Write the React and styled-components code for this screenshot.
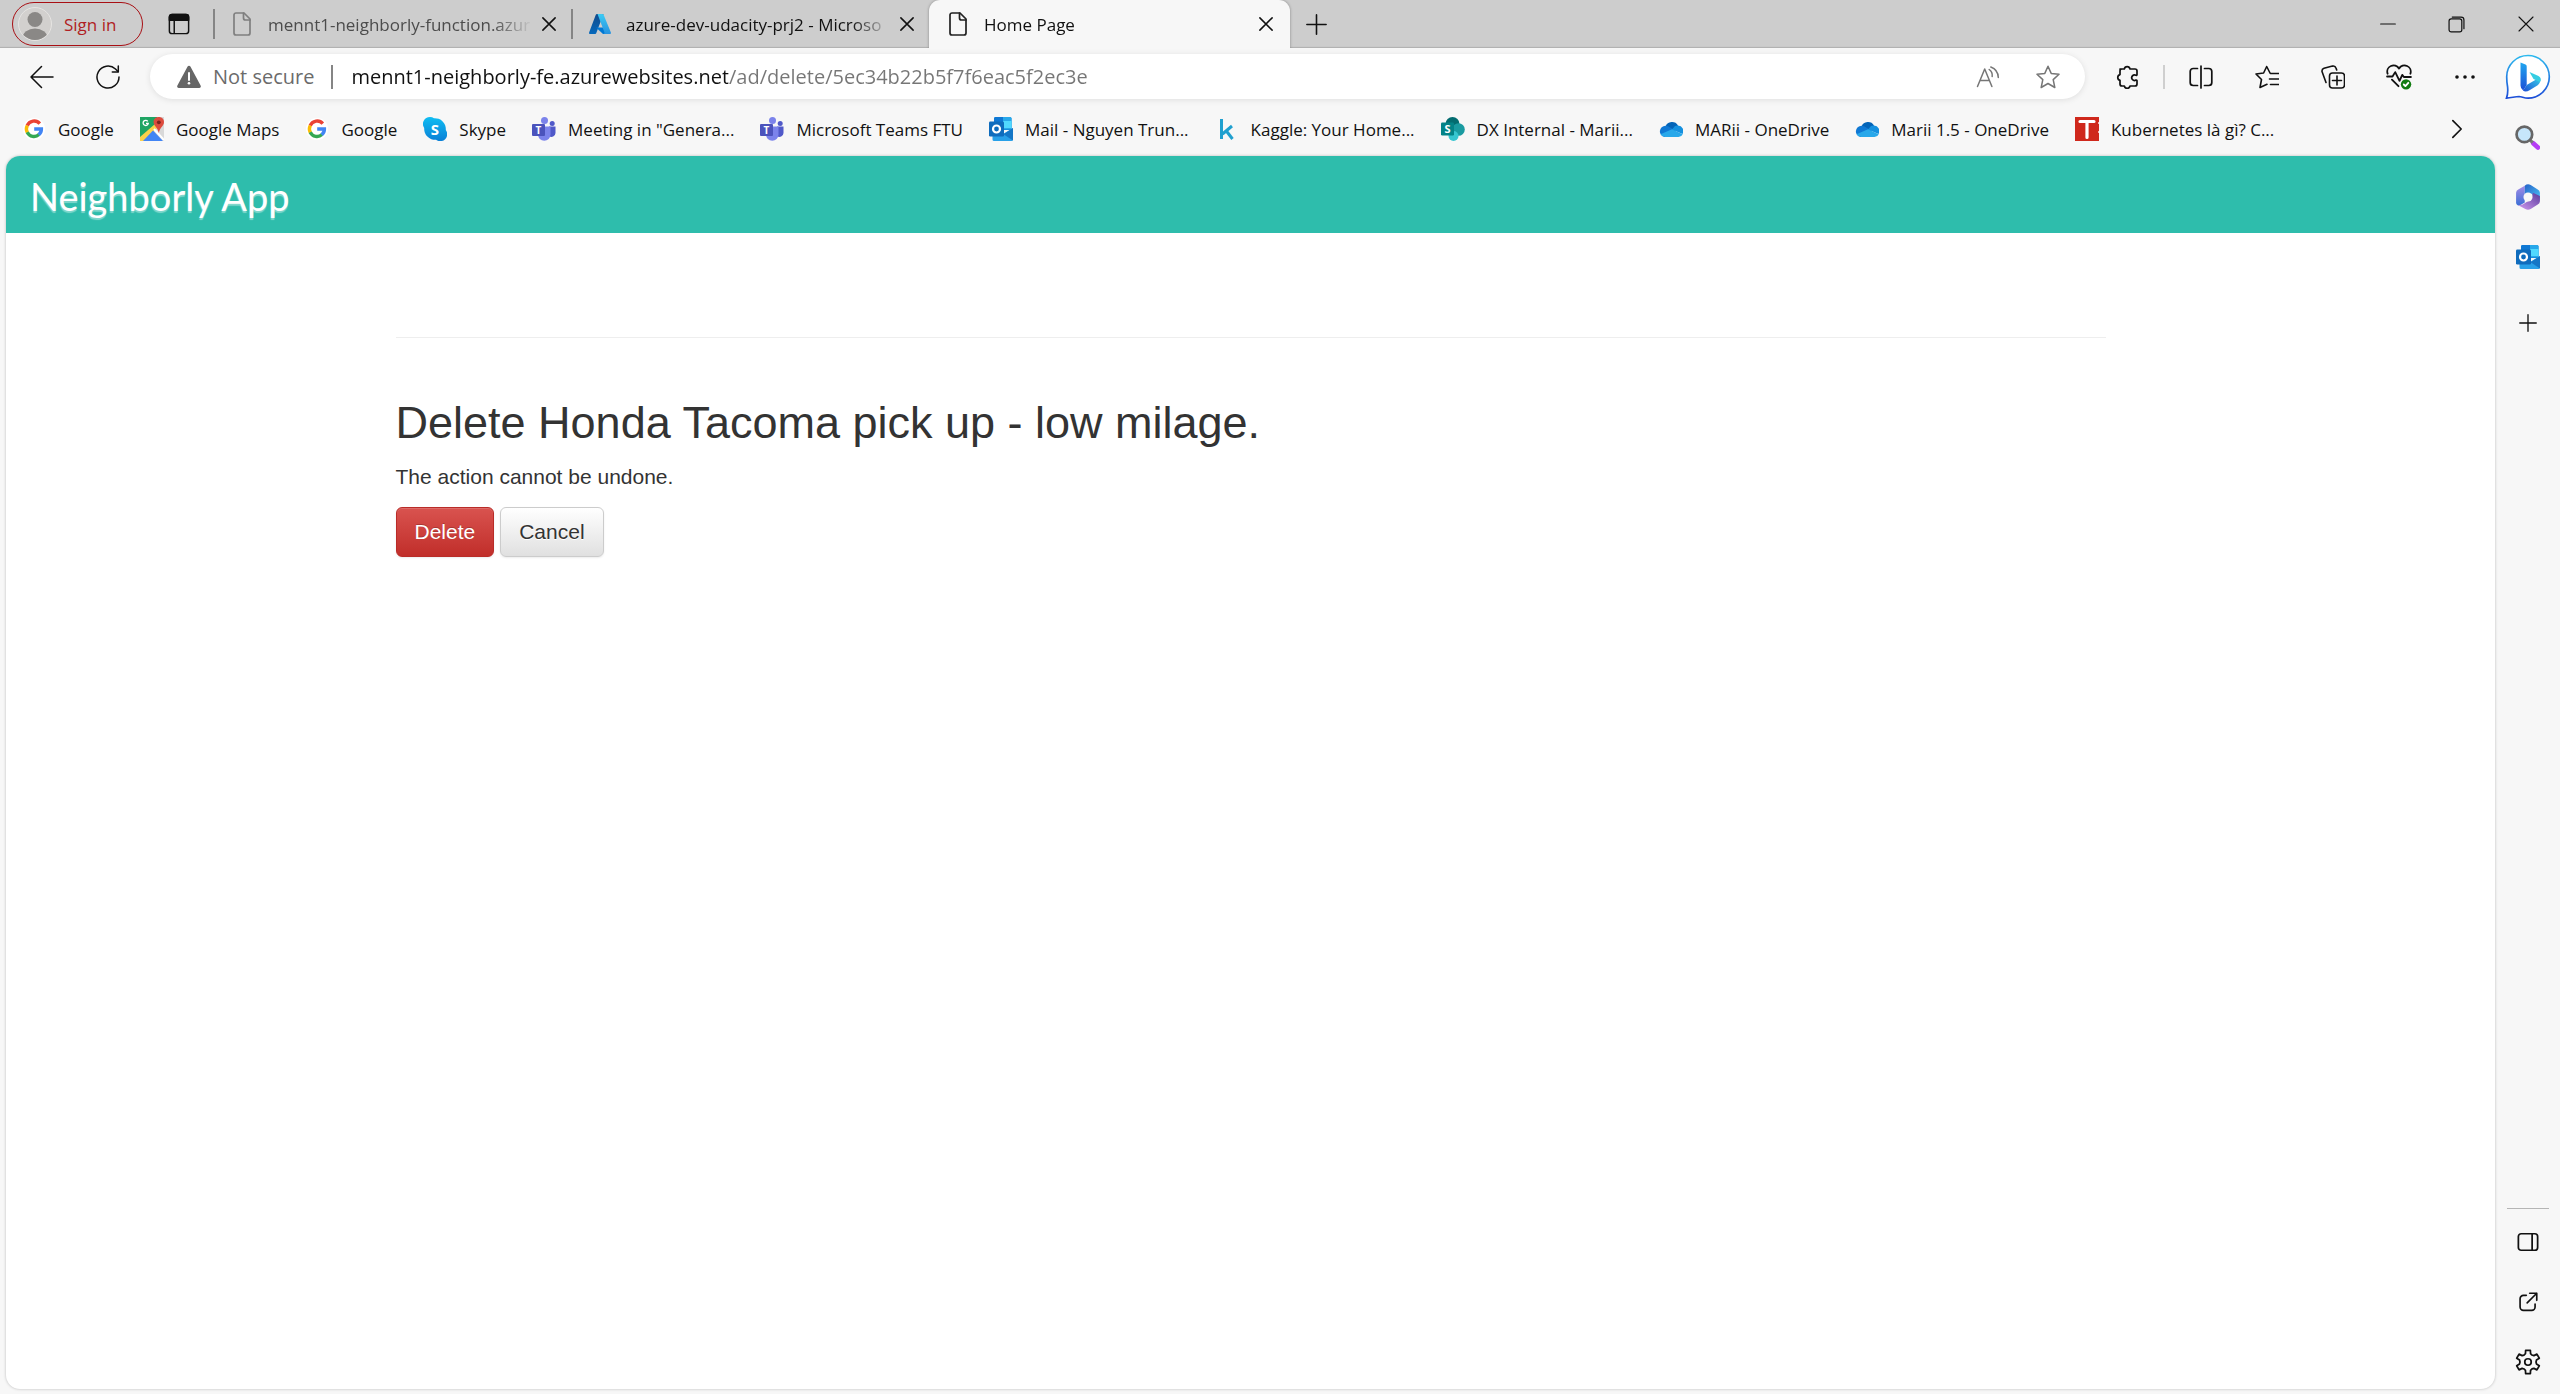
import React from "react";
import styled, { createGlobalStyle, css } from "styled-components";

const UI_FONT = '"Open Sans", "Noto Sans", sans-serif';
const BRAND_FONT = 'Lato, "Open Sans", sans-serif';
const PAGE_FONT = '"Liberation Sans", Arial, sans-serif';

const GlobalStyle = createGlobalStyle`
  *, *::before, *::after { box-sizing: border-box; }
  body { margin: 0; background: #f7f7f7; font-family: ${UI_FONT}; }
  button, input { font: inherit; color: inherit; }
  button { padding: 0; border: 0; background: none; cursor: pointer; }
  svg { display: block; flex: none; }
`;

/* ---------- window frame ---------- */

const Window = styled.div`
  display: flex;
  flex-direction: column;
  min-height: 100vh;
  background: #f7f7f7;
  color: #111;
`;

const Body = styled.div`
  flex: 1;
  display: flex;
`;

const Main = styled.div`
  flex: 1;
  min-width: 0;
  display: flex;
  flex-direction: column;
`;

/* ---------- tab strip ---------- */

const TabStrip = styled.header`
  display: flex;
  align-items: center;
  height: 48px;
  background: #cdcdcd;
  box-shadow: inset 0 -2px 1px -1px #b0b0b0;
  font-size: 17px;
`;

const SignIn = styled.button`
  display: flex;
  align-items: center;
  gap: 12px;
  width: 131px;
  height: 44px;
  margin-left: 12px;
  padding-left: 5px;
  border: 1px solid #a80f14;
  border-radius: 22px;
  color: #b01e23;
`;

const TabActions = styled.button`
  display: grid;
  place-items: center;
  width: 36px;
  height: 36px;
  margin: 0 16px 0 18px;
`;

const TabDivider = styled.span`
  width: 2px;
  height: 30px;
  background: #858585;
`;

const TabList = styled.div`
  display: flex;
  align-items: center;
  align-self: stretch;
`;

const Tab = styled.div`
  display: flex;
  align-items: center;
  align-self: stretch;
  width: 356px;
  padding: 0 8px 0 15px;
  color: ${(p) => (p.$asleep ? "#4c4c4c" : "#111")};
  ${(p) =>
    p.$active &&
    css`
      width: 361px;
      padding: 0 10px 0 17px;
      border-radius: 11px 11px 0 0;
      background: #f7f7f7;
      box-shadow: 0 0 3px rgba(0, 0, 0, 0.35);
      clip-path: inset(0 -4px 0 -4px);
    `}
`;

const TabTitle = styled.button`
  flex: 1;
  min-width: 0;
  display: flex;
  align-items: center;
  gap: 14px;
  height: 100%;
  text-align: left;
`;

const TabLabel = styled.span`
  flex: 1;
  overflow: hidden;
  white-space: nowrap;
  mask-image: linear-gradient(90deg, #000 calc(100% - 40px), transparent);
`;

const CloseTab = styled.button`
  display: grid;
  place-items: center;
  width: 28px;
  height: 28px;
  margin-left: 2px;
  color: #111;
`;

const NewTab = styled.button`
  display: grid;
  place-items: center;
  width: 36px;
  height: 36px;
  margin-left: 8px;
`;

const WindowControls = styled.div`
  display: flex;
  align-self: stretch;
  margin-left: auto;
`;

const WindowButton = styled.button`
  display: grid;
  place-items: center;
  width: 69px;
`;

/* ---------- toolbar ---------- */

const Toolbar = styled.nav`
  display: flex;
  align-items: center;
  height: 54px;
  padding: 6px 0 3px 24px;
`;

const HistoryButton = styled.button`
  display: grid;
  place-items: center;
  width: 36px;
  height: 36px;
  margin-right: ${(p) => (p.$last ? 24 : 30)}px;
`;

const AddressBar = styled.form`
  flex: 1;
  display: flex;
  align-items: center;
  height: 45px;
  padding: 0 7px 0 27px;
  margin-right: 12px;
  border-radius: 23px;
  background: #fff;
  box-shadow: 0 1px 6px rgba(0, 0, 0, 0.1);
  font-size: 20px;
`;

const Security = styled.button`
  display: flex;
  align-items: center;
  gap: 12px;
  color: #6b6b6b;
`;

const AddressDivider = styled.span`
  width: 2px;
  height: 24px;
  margin: 0 18px 0 17px;
  background: #858585;
`;

const Address = styled.input`
  flex: 1;
  min-width: 0;
  height: 36px;
  padding: 0;
  border: 0;
  outline: 0;
  background: linear-gradient(90deg, #111 377px, #767676 377px);
  background-clip: text;
  color: transparent;
`;

const ToolButton = styled.button`
  display: grid;
  place-items: center;
  width: 60px;
  height: 36px;
  color: ${(p) => (p.$muted ? "#767676" : "#111")};
`;

const ToolGroup = styled.div`
  display: flex;
  align-items: center;
  gap: 6px;
`;

const ToolDivider = styled.span`
  width: 2px;
  height: 24px;
  background: #cfcfcf;
`;

/* ---------- favourites ---------- */

const Favourites = styled.nav`
  display: flex;
  align-items: center;
  height: 54px;
  padding: 0 8px 0 22px;
  font-size: 17px;
`;

const FavouriteList = styled.ul`
  flex: 1;
  display: flex;
  gap: 26px;
  margin: 0;
  padding: 0;
  list-style: none;
`;

const Favourite = styled.a`
  display: flex;
  align-items: center;
  gap: 12px;
  color: #111;
  text-decoration: none;
  white-space: nowrap;
`;

/* ---------- side bar ---------- */

const SideBar = styled.aside`
  display: flex;
  flex-direction: column;
  align-items: center;
  width: 65px;
  padding: 6px 0 2px;
`;

const BingButton = styled.button`
  height: 45px;
  margin-bottom: 8px;
`;

const SideButton = styled.button`
  display: grid;
  place-items: center;
  width: 42px;
  height: 60px;
`;

const AddButton = styled(SideButton)`
  margin-top: 6px;
`;

const SideFooter = styled.div`
  display: flex;
  flex-direction: column;
  align-items: center;
  margin-top: auto;
  padding-top: 3px;
  border-top: 1px solid #b5b5b5;
`;

/* ---------- web page ---------- */

const Page = styled.div`
  flex: 1;
  margin: 0 0 5px 6px;
  overflow: hidden;
  border-radius: 14px;
  background: #fff;
  box-shadow: 0 0 3px rgba(0, 0, 0, 0.25);
  color: #333;
  font-family: ${PAGE_FONT};
  font-size: 21px;
  line-height: 30px;
`;

const Banner = styled.header`
  display: flex;
  align-items: center;
  height: 77px;
  padding: 3px 24px 0;
  background: #2ebdac;
`;

const Brand = styled.a`
  color: #fff;
  font-family: ${BRAND_FONT};
  font-size: 38px;
  line-height: 48px;
  text-decoration: none;
  text-shadow: 0 2px 1px rgba(255, 255, 255, 0.4);
`;

const Container = styled.main`
  max-width: 1770px;
  margin: 0 auto;
  padding: 104px 30px 0;
`;

const Rule = styled.hr`
  height: 1px;
  margin: 0 0 60px;
  border: 0;
  background: #eee;
`;

const Heading = styled.h2`
  margin: 0 0 14px;
  font-size: 45px;
  font-weight: 400;
  line-height: 50px;
`;

const Warning = styled.p`
  margin: 0 0 15px;
`;

const Actions = styled.form`
  display: flex;
  gap: 6px;
`;

const ActionButton = styled.button`
  padding: 9px 18px;
  border: 1px solid #ccc;
  border-radius: 6px;
  background: linear-gradient(#fff, #e0e0e0);
  box-shadow: inset 0 1px 0 rgba(255, 255, 255, 0.15), 0 1px 2px rgba(0, 0, 0, 0.08);
  color: #333;
  text-shadow: 0 1px 0 #fff;
  ${(p) =>
    p.$danger &&
    css`
      border-color: #b92c28;
      background: linear-gradient(#d9534f, #c12e2a);
      color: #fff;
      text-shadow: 0 -1px 0 rgba(0, 0, 0, 0.2);
    `}
`;

/* ---------- line icons ---------- */

const Line = ({ size = 24, width = 1.5, children, ...rest }) => (
  <svg width={size} height={size} viewBox="0 0 24 24" fill="none" stroke="currentColor"
    strokeWidth={width} strokeLinecap="round" strokeLinejoin="round" aria-hidden="true" {...rest}>
    {children}
  </svg>
);

const DocIcon = ({ faded }) => (
  <Line color={faded ? "#7f7f7f" : "#222"} width={1.7}>
    <path d="M6 1h8l6 6v14a2 2 0 0 1-2 2H6a2 2 0 0 1-2-2V3a2 2 0 0 1 2-2z" />
    <path d="M13.500 1v5a2 2 0 0 0 2 2H20" />
  </Line>
);
const CrossIcon = ({ size = 14, width = 2.6 }) => (
  <Line size={size} width={width}><path d="M1.500 1.500l21 21M22.500 1.500l-21 21" /></Line>
);
const PlusIcon = ({ size = 21 }) => (
  <Line size={size} width={1.8}><path d="M12 1v22M1 12h22" /></Line>
);
const TabActionsIcon = () => (
  <Line size={22} width={1.6}>
    <rect x="1.500" y="1.500" width="21" height="21" rx="3" />
    <path d="M1.500 8V4.500a3 3 0 0 1 3-3h15a3 3 0 0 1 3 3V8z" fill="currentColor" />
    <path d="M6.800 8v14" />
  </Line>
);
const BackIcon = () => <Line><path d="M23 12H1M11.500 1.500L1 12l10.500 10.500" /></Line>;
const ReloadIcon = () => (
  <Line>
    <path d="M23 12A11 11 0 1 1 19.500 4L22 6.500" />
    <path d="M22.300 1v6h-6" />
  </Line>
);
const WarnIcon = () => (
  <svg width="24" height="24" viewBox="0 0 24 24" aria-hidden="true">
    <path d="M10.600 1.600a1.600 1.600 0 0 1 2.800 0l10.200 19a1.600 1.600 0 0 1-1.400 2.400H1.800a1.600 1.600 0 0 1-1.400-2.400z" fill="#666" />
    <path d="M12 8v7" stroke="#fff" strokeWidth="2" strokeLinecap="round" />
    <circle cx="12" cy="18.300" r="1.300" fill="#fff" />
  </svg>
);
const ReadAloudIcon = () => (
  <Line>
    <path d="M1.500 21.500L8.700 4l7.200 17.500M4 15.500h9.500" />
    <path d="M13.200 4.500a7.500 7.500 0 0 1 3 7M14.800 2a11.500 11.500 0 0 1 7.500 10.500" />
  </Line>
);
const StarIcon = () => (
  <Line><path d="M12 1.200l3.200 7.200 7.800.9-5.800 5.300 1.600 7.900L12 18.500l-6.800 4 1.600-7.900L1 9.300l7.800-.9z" /></Line>
);
const PuzzleIcon = () => (
  <Line width={1.700}>
    <path d="M5 4h4.300a2.900 2.900 0 0 1 5.700 0H20a2 2 0 0 1 2 2v3.600a.8.8 0 0 1-1 .7 2.800 2.800 0 1 0 0 4.800.8.8 0 0 1 1 .7V19a2 2 0 0 1-2 2h-5a2.900 2.900 0 0 1-5.700 0H7a2 2 0 0 1-2-2v-3.600a3 3 0 0 1 0-5.800V6a2 2 0 0 1 2-2" />
  </Line>
);
const SplitIcon = () => (
  <Line width={1.700}>
    <path d="M8.500 3.500H4.200a3 3 0 0 0-3 3v11a3 3 0 0 0 3 3h4.300M15.500 3.500h4.300a3 3 0 0 1 3 3v11a3 3 0 0 1-3 3h-4.300M12 1v22" />
  </Line>
);
const FavouritesIcon = () => (
  <Line width={1.600}>
    <path d="M15 8l-3.300-6.500L8.600 8 1 9l5.500 5.500L5 22.500l7-3.200" />
    <path d="M15.500 8.500H24M14.500 14H24M15.500 19.500H24" />
  </Line>
);
const CollectionsIcon = () => (
  <Line width={1.600}>
    <rect x="8.500" y="8" width="15" height="15" rx="3" />
    <path d="M16 11v9M11.500 15.500h9M5 17.500L1 6.500a3 3 0 0 1 2-3.200l8.500-2.200a3 3 0 0 1 3.500 2L15.700 5" />
  </Line>
);
const HealthIcon = () => (
  <Line size={26} width={1.700}>
    <path d="M1.500 9A5.800 5.800 0 0 1 12 4.200 5.800 5.800 0 0 1 22.500 9M1 11.500h5l2.500-4 4 8 2.500-5.500 1.500 2H23M5.500 14.500l6 6" />
    <circle cx="18.500" cy="18.800" r="4.800" fill="#107c10" stroke="none" />
    <path d="M16.400 18.900l1.500 1.500 2.700-3" stroke="#fff" />
  </Line>
);
const DotsIcon = () => (
  <svg width="20" height="6" viewBox="0 0 20 6" aria-hidden="true">
    {[2, 10, 18].map((x) => <circle key={x} cx={x} cy="3" r="1.800" fill="#111" />)}
  </svg>
);
const ChevronIcon = () => <Line size={20} width={2}><path d="M7 2l10 10L7 22" /></Line>;
const MinimizeIcon = () => <Line size={16} width={1.800}><path d="M1 12h22" /></Line>;
const RestoreIcon = () => (
  <Line size={17} width={1.700}>
    <rect x="1.500" y="4" width="18" height="18.500" rx="3" />
    <path d="M6 1.500h12.500a4 4 0 0 1 4 4V18" />
  </Line>
);

/* ---------- colour icons ---------- */

const Colour = ({ size = 24, children }) => (
  <svg width={size} height={size} viewBox="0 0 24 24" aria-hidden="true">{children}</svg>
);

const AvatarIcon = () => (
  <svg width="34" height="34" viewBox="0 0 34 34" aria-hidden="true">
    <defs><clipPath id="avatar"><circle cx="17" cy="17" r="16" /></clipPath></defs>
    <circle cx="17" cy="17" r="16.500" fill="#d2d0ce" stroke="#e6e4e2" />
    <g fill="#8a8886" clipPath="url(#avatar)">
      <circle cx="17" cy="12.500" r="7.500" />
      <ellipse cx="17" cy="31" rx="12.500" ry="9.500" />
    </g>
  </svg>
);
const AzureIcon = () => (
  <Colour>
    <defs>
      <linearGradient id="azL" x1="0" y1="0" x2="0" y2="1"><stop stopColor="#114a8b" /><stop offset="1" stopColor="#0669bc" /></linearGradient>
      <linearGradient id="azR" x1="0" y1="0" x2="0" y2="1"><stop stopColor="#3ccbf4" /><stop offset="1" stopColor="#2892df" /></linearGradient>
    </defs>
    <path d="M9 2h6.500L8.300 21a1.300 1.300 0 0 1-1.200 1H2.300a1.200 1.200 0 0 1-1.200-1.600L7.800 2.800A1.300 1.300 0 0 1 9 2z" fill="url(#azL)" />
    <path d="M18 15.500H8l7 6.500h6z" fill="#0078d4" />
    <path d="M15.600 2.800A1.300 1.300 0 0 0 14.400 2H9.500l7 18.600a1.200 1.200 0 0 1-1.200 1.400h6.500a1.200 1.200 0 0 0 1.100-1.600z" fill="url(#azR)" />
  </Colour>
);
const GoogleIcon = () => (
  <Colour>
    <circle cx="12" cy="12" r="11" fill="#fff" />
    <g fill="none" strokeWidth="3.400">
      <path d="M17.800 6.600A7.500 7.500 0 0 0 5.200 8.700" stroke="#ea4335" />
      <path d="M5.300 8.500a7.500 7.500 0 0 0 0 7" stroke="#fbbc05" />
      <path d="M5.200 15.300A7.500 7.500 0 0 0 17 17.600" stroke="#34a853" />
      <path d="M16.800 17.800A7.500 7.500 0 0 0 19.400 12H12.200" stroke="#4285f4" />
    </g>
  </Colour>
);
const MapsIcon = () => (
  <Colour>
    <path d="M0 0h24v24H0z" fill="#d9d9d9" />
    <path d="M0 0h17v9L0 24z" fill="#1fa463" />
    <path d="M0 20L15 7l3 3L4 24H0z" fill="#fbd14b" />
    <path d="M3 24l10-10.500L23 24z" fill="#4285f4" />
    <path d="M14 12l10 11" stroke="#fff" strokeWidth="2" />
    <path d="M18.800 0c-3.300 0-5.200 2.300-5.200 5 0 4 4 5 5.200 11 1.200-6 5.200-7 5.200-11 0-2.700-1.900-5-5.200-5z" fill="#dd4b3e" />
    <circle cx="18.800" cy="5.300" r="1.900" fill="#7d231d" />
    <path d="M7.800 4.300A2.600 2.600 0 1 0 8.300 6.300H6" fill="none" stroke="#fff" strokeWidth="1.300" />
  </Colour>
);
const Glyph = styled.text`
  font-family: ${UI_FONT};
  font-weight: 700;
  text-anchor: middle;
  fill: #fff;
`;
const SkypeIcon = () => (
  <Colour>
    <defs><linearGradient id="sky" x1="0" y1="0" x2="0" y2="1"><stop stopColor="#10bdf2" /><stop offset="1" stopColor="#0a7fd6" /></linearGradient></defs>
    <path d="M7 0a7 7 0 0 1 4 1.200A11 11 0 0 1 22.800 13 7 7 0 0 1 13 22.800 11 11 0 0 1 1.200 11 7 7 0 0 1 7 0z" fill="url(#sky)" />
    <Glyph x="12" y="17.500" fontSize="15">S</Glyph>
  </Colour>
);
const TeamsIcon = () => (
  <Colour>
    <circle cx="20.200" cy="6.500" r="2.500" fill="#5059c9" />
    <circle cx="12.500" cy="3.500" r="3.500" fill="#7b83eb" />
    <path d="M17 9.500h6.500v6.500a4 4 0 0 1-6.500 3z" fill="#5059c9" />
    <path d="M6 9.500h12.500v8a6.200 6.200 0 0 1-12.500 0z" fill="#7b83eb" />
    <rect y="7" width="13" height="12" rx="1" fill="#4b53bc" />
    <Glyph x="6.500" y="16.700" fontSize="10">T</Glyph>
  </Colour>
);
const OutlookIcon = () => (
  <Colour>
    <path d="M5 1.500A1.500 1.500 0 0 1 6.500 0H21a1.500 1.500 0 0 1 1.500 1.500V13H5z" fill="#1490df" />
    <path d="M5 1.500A1.500 1.500 0 0 1 6.500 0H14v6H5z" fill="#0f78d4" />
    <path d="M14 0h7a1.500 1.500 0 0 1 1.500 1.500V12H14z" fill="#28a8ea" />
    <path d="M14 4h8.500v7H14z" fill="#50d9ff" />
    <path d="M3.500 12l10.500 5 10-6v11.500a1.500 1.500 0 0 1-1.500 1.500H5a1.500 1.500 0 0 1-1.500-1.500z" fill="#28a0e8" />
    <path d="M14.500 17.300L24 23.500V11z" fill="#1476c6" />
    <rect y="4.500" width="15" height="15" rx="1.200" fill="#0f6cbd" />
    <circle cx="7.500" cy="12" r="3.500" fill="none" stroke="#fff" strokeWidth="2.200" />
  </Colour>
);
const KaggleIcon = () => (
  <Colour><path d="M6.500 2v20M17 9l-9.500 8M11 13.500l6.500 8.500" fill="none" stroke="#20a0cf" strokeWidth="3" /></Colour>
);
const SharePointIcon = () => (
  <Colour>
    <circle cx="11.500" cy="7" r="7" fill="#036c70" />
    <circle cx="17.500" cy="12.500" r="6.300" fill="#1a9ba1" />
    <circle cx="12.500" cy="19" r="5" fill="#37c6d0" />
    <rect y="5.500" width="13" height="13" rx="1.200" fill="#038387" />
    <Glyph x="6.500" y="16" fontSize="11">S</Glyph>
  </Colour>
);
const OneDriveIcon = () => (
  <Colour>
    <path d="M6.500 9.500a7 7 0 0 1 12.500-1L14 16z" fill="#0364b8" />
    <path d="M6.500 8.700a6 6 0 0 1 3 .8L17 14 5.500 20A5.700 5.700 0 0 1 6.500 8.700z" fill="#0f78d4" />
    <path d="M19 8.500a5.500 5.500 0 0 1 4.500 8.500L13 12.500l3-3.400a6 6 0 0 1 3-.6z" fill="#1490df" />
    <path d="M1.500 17.200L13 12.300l10.700 4.900A4.600 4.600 0 0 1 19.500 20h-13a6 6 0 0 1-5-2.800z" fill="#28a8ea" />
  </Colour>
);
const TopDevIcon = () => (
  <Colour>
    <path d="M0 0h24v24H0z" fill="#cf281c" />
    <path d="M5 4.500h14M12 4.500v16" stroke="#fff" strokeWidth="3.200" strokeLinecap="round" />
    <path d="M23 6h1M23 15h1" stroke="#f3b9b4" strokeWidth="2" />
  </Colour>
);
const BingIcon = () => (
  <svg width="46" height="47" viewBox="0 0 46 47" aria-hidden="true">
    <defs>
      <linearGradient id="ring" x1="0" y1="0" x2="0" y2="1"><stop stopColor="#2db9ee" /><stop offset="1" stopColor="#1d4ed8" /></linearGradient>
      <linearGradient id="bee" x1="0" y1="0" x2="0" y2="1"><stop stopColor="#1fa6f0" /><stop offset="1" stopColor="#1c4fd6" /></linearGradient>
      <linearGradient id="bow" x1="0" y1="1" x2="1" y2="0"><stop stopColor="#1c4fd6" /><stop offset="1" stopColor="#38d0e8" /></linearGradient>
    </defs>
    <path d="M23 1.500a21.300 21.300 0 1 1 0 42.600c-4 0-6-1.500-9-1.600-4 0-8 1.500-12.500 1.600C3 40 3 37 2.600 33 1.800 29 1.700 26 1.700 22.800A21.300 21.300 0 0 1 23 1.500z" fill="#fff" stroke="url(#ring)" strokeWidth="1.700" />
    <path d="M15.500 8.500l5 2a2 2 0 0 1 1.200 2V31l-3.500 5.500a6 6 0 0 1-2.700-5z" fill="url(#bee)" />
    <path d="M18 36.800c2 1 4.300.8 6.500-.6l7-4.200c3.500-2 4.700-5.500 3-8.500L21.700 31z" fill="url(#bow)" />
    <path d="M24.500 18l9 4c2.500 1.200 3 4 1.500 6l-6.500-3z" fill="#35cde2" />
  </svg>
);
const SearchIcon = () => (
  <Colour size={25}>
    <path d="M17.500 17.500l4.500 4" stroke="#b53df5" strokeWidth="4.500" strokeLinecap="round" />
    <path d="M14 14l3 3" stroke="#777" strokeWidth="3" />
    <circle cx="9" cy="9" r="7.500" fill="#c6e6fb" stroke="#666" strokeWidth="2.600" />
  </Colour>
);
const M365Icon = () => (
  <Colour size={26}>
    <defs>
      <linearGradient id="mA" x1="0" y1="0" x2="1" y2="1"><stop stopColor="#2563c9" /><stop offset="1" stopColor="#4cc3f4" /></linearGradient>
      <linearGradient id="mB" x1="0" y1="0" x2="0" y2="1"><stop stopColor="#a58be6" /><stop offset="1" stopColor="#3b6fd6" /></linearGradient>
      <linearGradient id="mC" x1="1" y1="0" x2="0" y2="1"><stop stopColor="#5a3a9c" /><stop offset="1" stopColor="#d09af0" /></linearGradient>
    </defs>
    <path d="M9 1.500L3 5a3.500 3.500 0 0 0-2 3v9.500a2.500 2.500 0 0 0 4 1.800L9 17z" fill="url(#mB)" />
    <path d="M9 1.500a5 5 0 0 1 5.500-.6L21 5a3.500 3.500 0 0 1 2 3v7l-8-6-6 1z" fill="url(#mA)" />
    <path d="M23 11v5a3.500 3.500 0 0 1-2 3l-6.500 4a5 5 0 0 1-5 0L3 19.500l4-.5 8-5 1.500-6z" fill="url(#mC)" />
    <circle cx="12" cy="12" r="4.200" fill="#f7f7f7" />
  </Colour>
);
const PanelIcon = () => (
  <Line size={22} width={1.900}><rect x="1.500" y="3" width="21" height="18" rx="3" /><path d="M16.500 3v18" /></Line>
);
const OpenIcon = () => (
  <Line size={20} width={2}>
    <path d="M10 4H6.500A4 4 0 0 0 2.500 8v10a4 4 0 0 0 4 4h10a4 4 0 0 0 4-4v-3.500M11 13L22.500 1.500M14 1.500h8.500V10" />
  </Line>
);
const gear = (() => {
  const pts = [];
  for (let i = 0; i < 6; i++) {
    const a = (i * Math.PI) / 3 - Math.PI / 2;
    [[-0.3, 8], [-0.2, 11], [0.2, 11], [0.3, 8], [0.52, 7.400]].forEach(([d, r]) =>
      pts.push(`${(12 + r * Math.cos(a + d)).toFixed(2)} ${(12 + r * Math.sin(a + d)).toFixed(2)}`)
    );
  }
  return `M${pts.join("L")}z`;
})();
const GearIcon = () => (
  <Line size={26} width={1.600}><path d={gear} /><circle cx="12" cy="12" r="3" /></Line>
);

/* ---------- data ---------- */

const favourites = [
  ["Google", GoogleIcon],
  ["Google Maps", MapsIcon],
  ["Google", GoogleIcon],
  ["Skype", SkypeIcon],
  ['Meeting in "Genera...', TeamsIcon],
  ["Microsoft Teams FTU", TeamsIcon],
  ["Mail - Nguyen Trun...", OutlookIcon],
  ["Kaggle: Your Home...", KaggleIcon],
  ["DX Internal - Marii...", SharePointIcon],
  ["MARii - OneDrive", OneDriveIcon],
  ["Marii 1.5 - OneDrive", OneDriveIcon],
  ["Kubernetes là gì? C...", TopDevIcon],
];

const BrowserTab = ({ icon, title, active, asleep }) => (
  <Tab $active={active} $asleep={asleep}>
    <TabTitle type="button" role="tab" aria-selected={!!active}>
      {icon}
      <TabLabel>{title}</TabLabel>
    </TabTitle>
    <CloseTab type="button" aria-label="Close tab"><CrossIcon /></CloseTab>
  </Tab>
);

const stop = (e) => e.preventDefault();

export default function App() {
  return (
    <Window>
      <GlobalStyle />
      <TabStrip>
        <SignIn type="button"><AvatarIcon />Sign in</SignIn>
        <TabActions type="button" aria-label="Tab actions"><TabActionsIcon /></TabActions>
        <TabDivider />
        <TabList role="tablist">
          <BrowserTab asleep icon={<DocIcon faded />} title="mennt1-neighborly-function.azur" />
          <TabDivider />
          <BrowserTab icon={<AzureIcon />} title="azure-dev-udacity-prj2 - Microso" />
          <BrowserTab active icon={<DocIcon />} title="Home Page" />
        </TabList>
        <NewTab type="button" aria-label="New tab"><PlusIcon /></NewTab>
        <WindowControls>
          <WindowButton type="button" aria-label="Minimize"><MinimizeIcon /></WindowButton>
          <WindowButton type="button" aria-label="Restore"><RestoreIcon /></WindowButton>
          <WindowButton type="button" aria-label="Close"><CrossIcon size={16} width={1.700} /></WindowButton>
        </WindowControls>
      </TabStrip>

      <Body>
        <Main>
          <Toolbar>
            <HistoryButton type="button" aria-label="Back"><BackIcon /></HistoryButton>
            <HistoryButton type="button" aria-label="Reload" $last><ReloadIcon /></HistoryButton>
            <AddressBar onSubmit={stop}>
              <Security type="button"><WarnIcon />Not secure</Security>
              <AddressDivider />
              <Address
                type="text"
                aria-label="Address"
                defaultValue="mennt1-neighborly-fe.azurewebsites.net/ad/delete/5ec34b22b5f7f6eac5f2ec3e"
              />
              <ToolButton type="button" $muted aria-label="Read aloud"><ReadAloudIcon /></ToolButton>
              <ToolButton type="button" $muted aria-label="Add to favorites"><StarIcon /></ToolButton>
            </AddressBar>
            <ToolGroup>
              <ToolButton type="button" aria-label="Extensions"><PuzzleIcon /></ToolButton>
              <ToolDivider />
              <ToolButton type="button" aria-label="Split screen"><SplitIcon /></ToolButton>
              <ToolButton type="button" aria-label="Favorites"><FavouritesIcon /></ToolButton>
              <ToolButton type="button" aria-label="Collections"><CollectionsIcon /></ToolButton>
              <ToolButton type="button" aria-label="Browser essentials"><HealthIcon /></ToolButton>
              <ToolButton type="button" aria-label="Settings and more"><DotsIcon /></ToolButton>
            </ToolGroup>
          </Toolbar>

          <Favourites>
            <FavouriteList>
              {favourites.map(([label, Icon], i) => (
                <li key={i}><Favourite href="#"><Icon />{label}</Favourite></li>
              ))}
            </FavouriteList>
            <ToolButton type="button" aria-label="More favorites"><ChevronIcon /></ToolButton>
          </Favourites>

          <Page>
            <Banner><Brand href="#">Neighborly App</Brand></Banner>
            <Container>
              <Rule />
              <Heading>Delete Honda Tacoma pick up - low milage.</Heading>
              <Warning>The action cannot be undone.</Warning>
              <Actions onSubmit={stop}>
                <ActionButton type="submit" $danger>Delete</ActionButton>
                <ActionButton type="button">Cancel</ActionButton>
              </Actions>
            </Container>
          </Page>
        </Main>

        <SideBar>
          <BingButton type="button" aria-label="Bing"><BingIcon /></BingButton>
          <SideButton type="button" aria-label="Search"><SearchIcon /></SideButton>
          <SideButton type="button" aria-label="Microsoft 365"><M365Icon /></SideButton>
          <SideButton type="button" aria-label="Outlook"><OutlookIcon /></SideButton>
          <AddButton type="button" aria-label="Customize"><PlusIcon size={18} /></AddButton>
          <SideFooter>
            <SideButton type="button" aria-label="Hide sidebar"><PanelIcon /></SideButton>
            <SideButton type="button" aria-label="Open externally"><OpenIcon /></SideButton>
            <SideButton type="button" aria-label="Settings"><GearIcon /></SideButton>
          </SideFooter>
        </SideBar>
      </Body>
    </Window>
  );
}
